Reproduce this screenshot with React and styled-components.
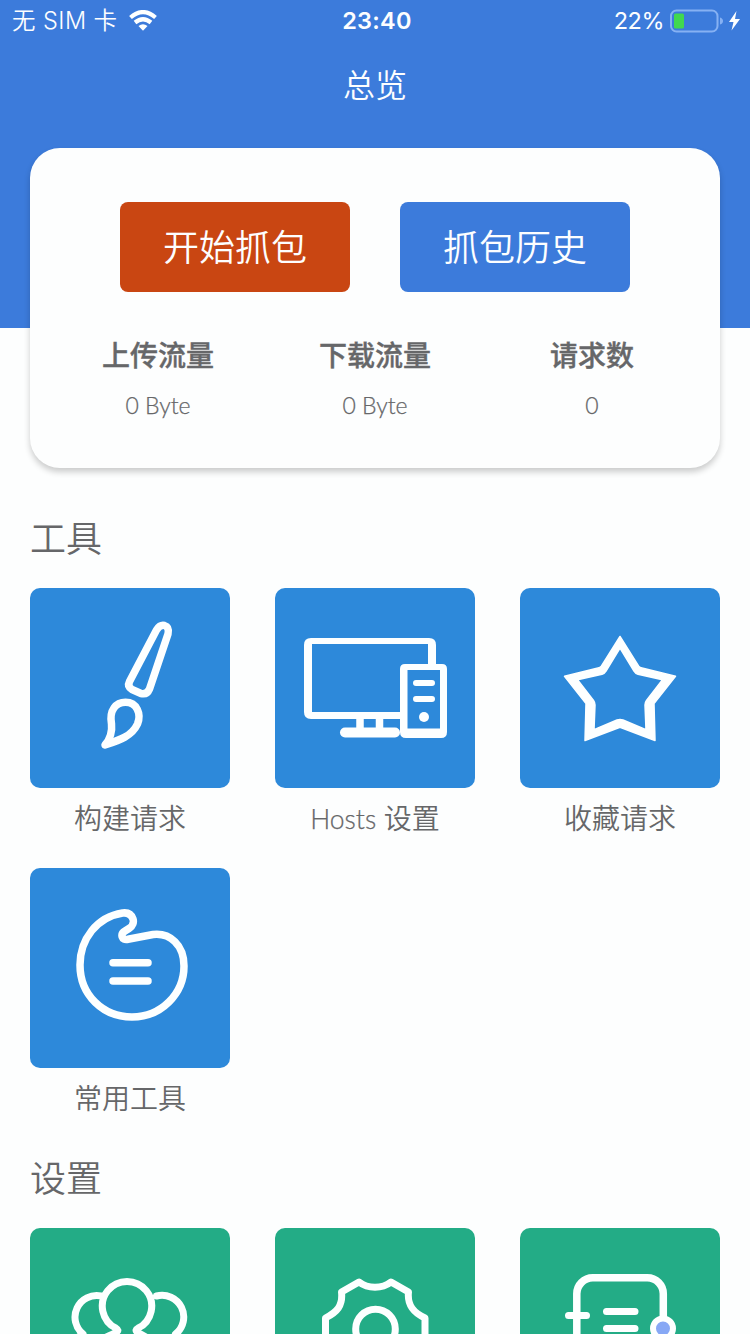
import React from "react";
import styled, { createGlobalStyle } from "styled-components";

const Global = createGlobalStyle`
  * { box-sizing: border-box; }
  html, body { margin: 0; padding: 0; }
  body {
    background: #fdfefe;
    color: #666769;
    font-family: Lato, "Noto Sans CJK SC", sans-serif;
  }
`;

const Screen = styled.main`
  width: 750px;
  height: 1334px;
  overflow: hidden;
  background: #fdfefe;
`;

const Header = styled.header`
  height: 328px;
  background: #3c7bdb;
  color: #fdfeff;
`;

const StatusBar = styled.div`
  display: grid;
  grid-template-columns: 1fr auto 1fr;
  align-items: center;
  height: 40px;
  padding: 0 8px 0 12px;
  font: 400 24px/42px Inter, "Noto Sans CJK SC", sans-serif;
`;

const StatusGroup = styled.div`
  display: flex;
  align-items: center;
  justify-content: ${(p) => (p.$end ? "flex-end" : "flex-start")};
  gap: ${(p) => (p.$end ? "6px" : "11px")};
  height: 40px;

  svg { display: block; flex: none; }
`;

const Carrier = styled.span`
  font-size: 23.5px;
  font-weight: 350;
  letter-spacing: 0.45px;
  white-space: nowrap;
`;

const Percent = styled.span`
  font-size: 23.5px;
  letter-spacing: -0.5px;
`;

const Clock = styled.span`
  font-size: 23.5px;
  font-weight: 600;
  letter-spacing: 0.3px;
`;

const Title = styled.h1`
  margin: 0;
  font: 350 32px/86px "Noto Sans CJK SC", sans-serif;
  text-align: center;
`;

const Card = styled.section`
  height: 320px;
  margin: -180px 30px 0;
  padding: 54px 19px 0;
  position: relative;
  border-radius: 30px;
  background: #fdfefe;
  box-shadow: 0 4px 6px rgba(0, 0, 0, 0.2);
`;

const Actions = styled.div`
  display: flex;
  justify-content: center;
  gap: 50px;
`;

const Button = styled.button`
  width: 230px;
  height: 90px;
  padding: 0 0 3px;
  border: 0;
  border-radius: 8px;
  background: ${(p) => p.$color};
  color: #fdfeff;
  font: 350 36px/87px "Noto Sans CJK SC", sans-serif;
`;

const Stats = styled.div`
  display: grid;
  grid-template-columns: repeat(3, 217px);
  justify-content: center;
  margin-top: 37px;
  text-align: center;
`;

const StatName = styled.div`
  font: 500 28px/50px "Noto Sans CJK SC", sans-serif;
  -webkit-text-stroke: 0.4px currentColor;
`;

const StatValue = styled.div`
  font-size: 23px;
  font-weight: 300;
  line-height: 53px;
  -webkit-text-stroke: 0.25px currentColor;
`;

const SectionTitle = styled.h2`
  height: 100px;
  margin: ${(p) => (p.$first ? "20px" : "0")} 30px 0;
  font: 350 36px/96px "Noto Sans CJK SC", sans-serif;
`;

const Grid = styled.div`
  display: grid;
  grid-template-columns: repeat(3, 200px);
  justify-content: space-between;
  row-gap: 20px;
  margin: 0 30px;
`;

const Item = styled.div`
  height: 260px;
  text-align: center;
`;

const Tile = styled.div`
  width: 200px;
  height: 200px;
  border-radius: 10px;
  background: ${(p) => p.$color};

  svg { display: block; }
`;

const Label = styled.div`
  font-size: 28px;
  font-weight: 350;
  line-height: 60px;
  white-space: nowrap;
`;

const Latin = styled.span`
  font-size: 26.5px;
  font-weight: 300;
  -webkit-text-stroke: 0.25px currentColor;
`;

const Icon = ({ children }) => (
  <svg
    width="200"
    height="200"
    viewBox="0 0 200 200"
    fill="none"
    stroke="#fdffff"
    strokeWidth="7.5"
    strokeLinecap="round"
    strokeLinejoin="round"
  >
    {children}
  </svg>
);

const Brush = () => (
  <Icon>
    <path d="M126.500 42Q130 36.500 134.500 37.500Q139.500 39 138 46L119.500 101Q117 107 111 105.500L102 101.500Q97 98.500 99.500 93.500Z" />
    <path d="M75 157C80 151 82.500 145 81.500 136C79 122 86 114.300 95.500 114.300C107 114.300 111.500 126 107.500 136C102 148 90 152 75 157Z" />
  </Icon>
);

const Computer = () => (
  <Icon>
    <path
      d="M36 50H154Q161 50 161 57V76H153V56H37V124H126V131H36Q29 131 29 124V57Q29 50 36 50Z"
      fill="#fdffff"
      stroke="none"
    />
    <path
      d="M130 76H167Q172 76 172 81V144Q172 150 166 150H131Q125 150 125 144V81Q125 76 130 76ZM132.500 82V140.500H165V82Z"
      fill="#fdffff"
      fillRule="evenodd"
      stroke="none"
    />
    <path d="M141 95H157M141 111H157" strokeWidth="6" />
    <path d="M85 130V142M104.500 130V142" strokeLinecap="butt" />
    <path d="M70 144.500H120" strokeWidth="10" />
    <circle cx="149" cy="129" r="5" fill="#fdffff" stroke="none" />
  </Icon>
);

const Star = () => (
  <Icon>
    <path
      d="M100 48.500L118.500 78Q119.500 79.500 121 79.800L155.500 88.300L134 115.500L135 152.500L100 139.300L65 152.500L66 115.500L44.500 88.300L79 79.800Q80.500 79.500 81.500 78ZM100 60L86 83Q84.500 85.500 82 86.200L57.500 91.700L73.500 112.500Q75 114.500 75 117L74 141.700L97 132Q100 131 103 132L126 141.700L125 117Q125 114.500 126.500 112.500L142.500 91.700L118 86.200Q115.500 85.500 114 83Z"
      fill="#fdffff"
      fillRule="evenodd"
      strokeWidth="1.500"
    />
  </Icon>
);

const Fist = () => (
  <Icon>
    <path d="M92.500 45C67 49 50 71 50 97C50 127 73 149 102 149C131 149 154 126 154 98C154 77 140 64.500 123 66.500L98 71.300C91.500 73 90 66 95 63L99 60.500C103 58 104 54 103 51C101.500 46.500 98 44.300 92.500 45Z" />
    <path d="M83 94.700H118M83 113H118" />
  </Icon>
);

const People = () => (
  <Icon>
    <path
      d="M88 167H50Q26 132 74 110C86 105 91 103 86 100.200A24.700 24.700 0 1 1 108 100.200C103 103 108 105 118 110Q170 132 144 167Z"
      strokeWidth="7"
    />
    <path
      d="M71 67.900A21.700 21.700 0 0 0 53 106Q43 111 37 128M126.500 68A21.700 21.700 0 0 1 145.500 106Q155 111 161 128"
      strokeWidth="7"
    />
  </Icon>
);

const Gear = () => (
  <Icon>
    <path
      d="M50.500 112V90C62 84 68 78 66.500 64L84 54C93 61 107 61 116 54L133.500 64C132 78 139 85 150 90V112C139 117 132 124 133.500 138L116 148C107 141 93 141 84 148L66.500 138C68 124 62 118 50.500 112Z"
      strokeWidth="7"
    />
    <circle cx="100.500" cy="101" r="19.800" strokeWidth="7" />
  </Icon>
);

const Notebook = () => (
  <Icon>
    <rect x="56.800" y="49.800" width="86.500" height="102" rx="16" />
    <path d="M48.500 87.500H66.500M86.500 83.500H115M86.500 100.500H115" strokeWidth="7" />
    <circle cx="143" cy="100.500" r="10" fill="#87a8f5" strokeWidth="6" />
  </Icon>
);

const Wifi = () => (
  <svg width="28" height="22" viewBox="0 0 28 22">
    <g fill="none" stroke="#fdffff" strokeWidth="4.200">
      <path d="M1.500 7.500Q14-3.300 26.500 7.500" />
      <path d="M6 12.500Q14 6 22 12.500" />
    </g>
    <path d="M9.500 16Q14 12.300 18.500 16L14 20.700Z" fill="#fdffff" />
  </svg>
);

const Battery = () => (
  <svg width="72" height="24" viewBox="0 0 72 24">
    <rect x="1" y="1.500" width="46.500" height="21" rx="5.500" fill="none" stroke="#86b1f3" strokeWidth="2" />
    <rect x="4" y="4.500" width="10" height="15" rx="1.500" fill="#41d84f" />
    <path d="M50 8.500Q53 9.500 53 12T50 15.500Z" fill="#86b1f3" />
    <path d="M66.500 2L59 13H63.500L61.500 21.500L70 10H65Z" fill="#fdffff" />
  </svg>
);

const stats = [
  ["上传流量", "0 Byte"],
  ["下载流量", "0 Byte"],
  ["请求数", "0"],
];

const tools = [
  ["构建请求", Brush],
  [<><Latin>Hosts</Latin> 设置</>, Computer],
  ["收藏请求", Star],
  ["常用工具", Fist],
];

const settings = [People, Gear, Notebook];

export default function App() {
  return (
    <Screen>
      <Global />
      <Header>
        <StatusBar>
          <StatusGroup>
            <Carrier>无 SIM 卡</Carrier>
            <Wifi />
          </StatusGroup>
          <Clock>23:40</Clock>
          <StatusGroup $end>
            <Percent>22%</Percent>
            <Battery />
          </StatusGroup>
        </StatusBar>
        <Title>总览</Title>
      </Header>
      <Card>
        <Actions>
          <Button $color="#c94612">开始抓包</Button>
          <Button $color="#3c7bdb">抓包历史</Button>
        </Actions>
        <Stats>
          {stats.map(([name, value]) => (
            <div key={name}>
              <StatName>{name}</StatName>
              <StatValue>{value}</StatValue>
            </div>
          ))}
        </Stats>
      </Card>
      <SectionTitle $first>工具</SectionTitle>
      <Grid>
        {tools.map(([label, Glyph], i) => (
          <Item key={i}>
            <Tile $color="#2d89da"><Glyph /></Tile>
            <Label>{label}</Label>
          </Item>
        ))}
      </Grid>
      <SectionTitle>设置</SectionTitle>
      <Grid>
        {settings.map((Glyph, i) => (
          <Item key={i}>
            <Tile $color="#23ac86"><Glyph /></Tile>
          </Item>
        ))}
      </Grid>
    </Screen>
  );
}
